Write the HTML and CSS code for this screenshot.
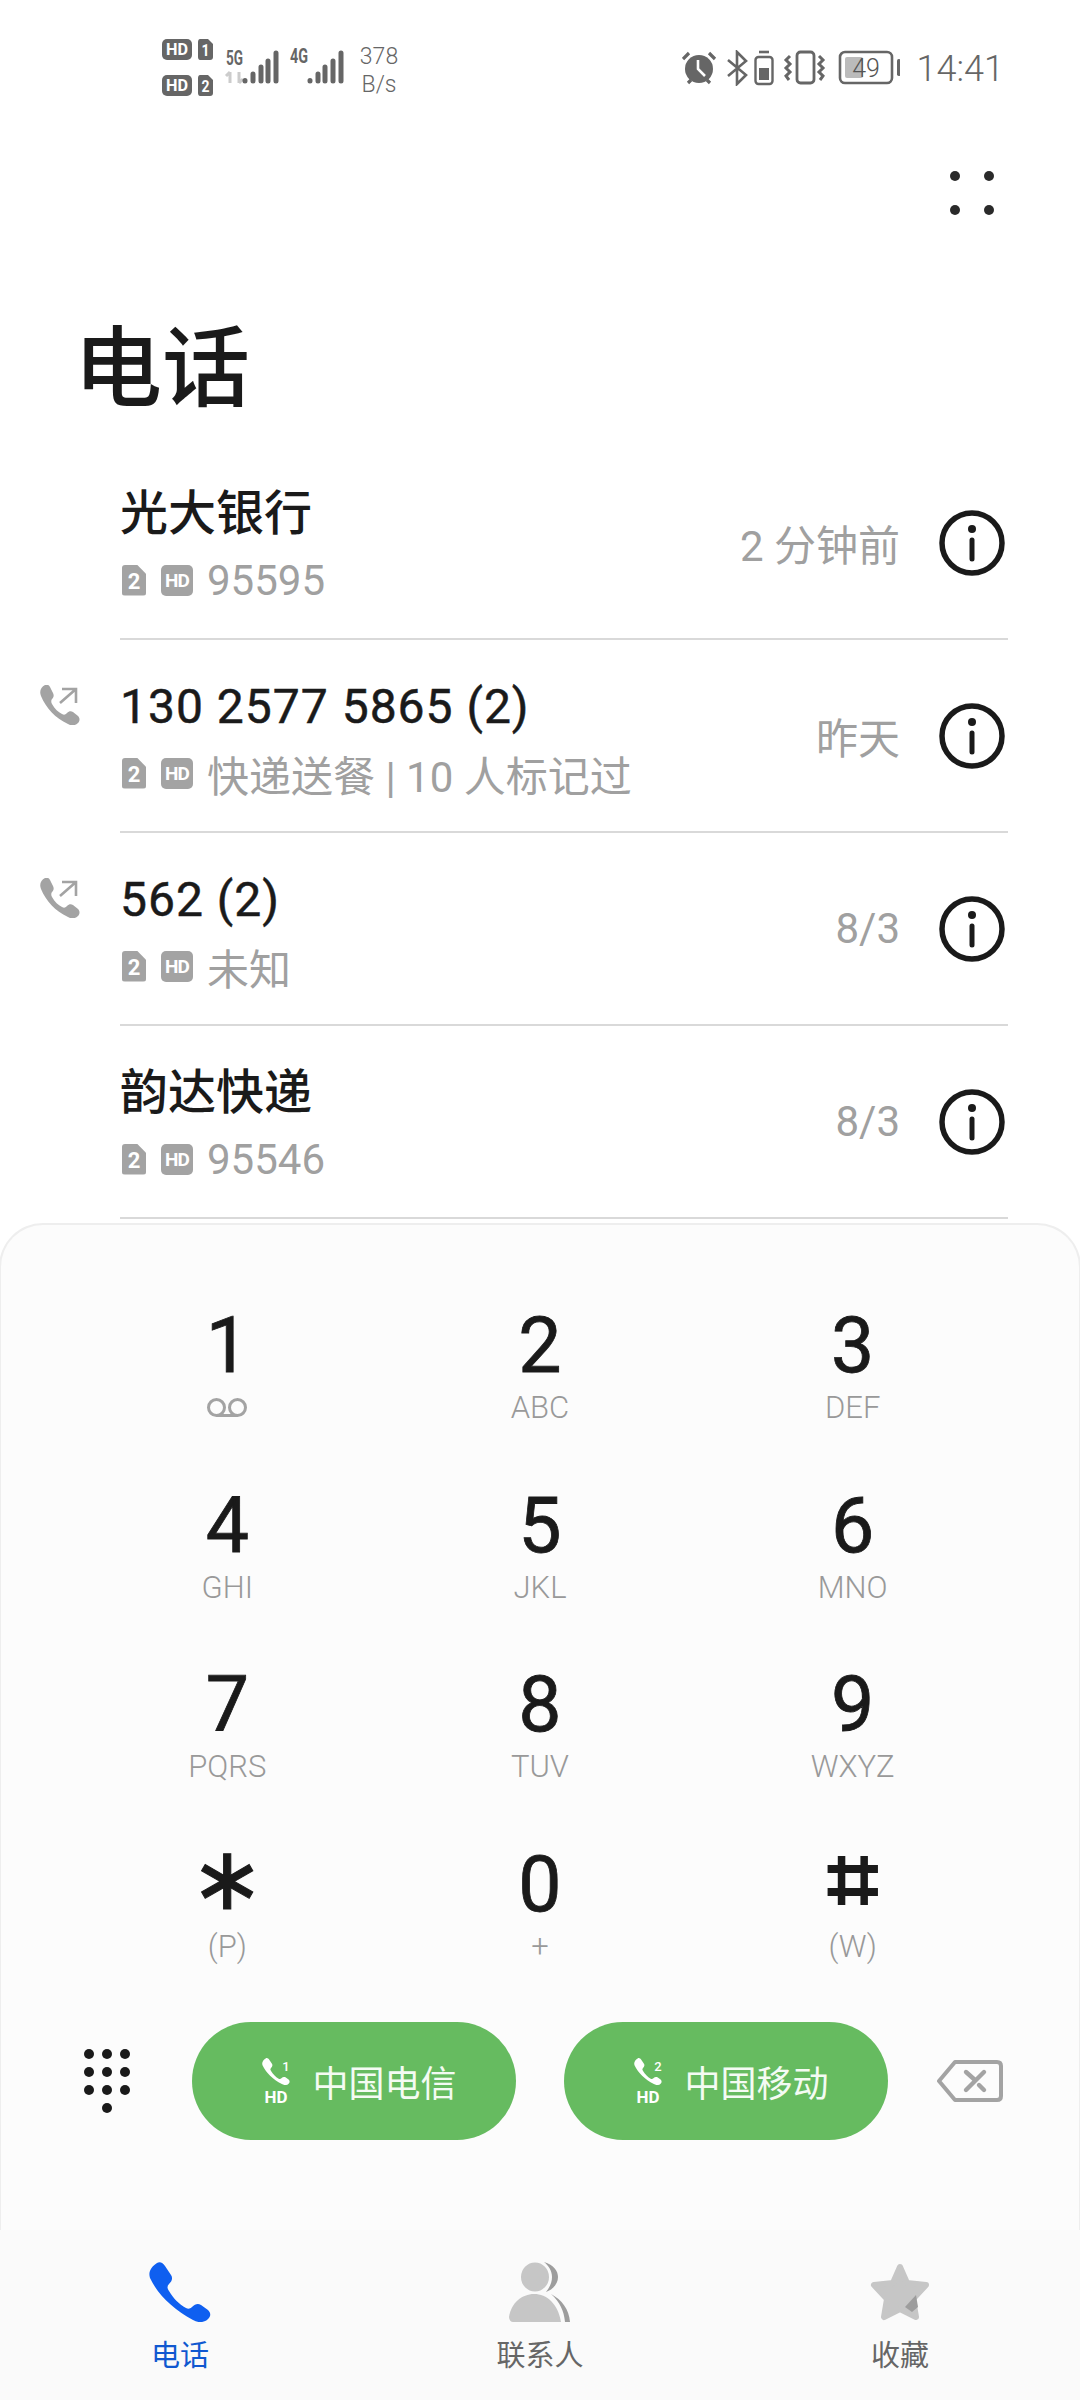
FILE: index.html
```html
<!DOCTYPE html>
<html>
	<head>
		<meta charset="UTF-8">
		<title>电话</title>
		<link rel="stylesheet" href="styles.css">
	</head>
	<body>
		<svg class="defs" width="0" height="0">
			<symbol id="phone" viewBox="0 0 62 60">
				<path d="M8 1C11-1 14 1 16 4L22 13C24 16 23 19 20 22C18 24 18 26 20 29C24 36 30 42 37 46C39 47 41 47 43 45C46 42 49 41 52 43L59 48C62 51 62 54 59 57C55 61 49 61 44 58C24 47 9 33 1 16C-1 10 2 5 8 1Z"/>
			</symbol>
			<symbol id="out" viewBox="0 0 40 40">
				<path fill="#a3a3a3" d="M5 0C7-1 9 0 10 2L13 8C14 10 14 12 12 14C11 15 11 17 12 19C15 24 18 27 22 29C24 30 25 30 27 28C29 26 31 26 33 27L38 31C40 33 40 36 38 38C35 41 31 41 28 39C15 33 6 23 1 11C-1 6 1 2 5 0Z"/>
				<path fill="none" stroke="#a3a3a3" stroke-width="2.6" d="M22 4H36V18M36 4L20 18"/>
			</symbol>
			<symbol id="info" viewBox="0 0 66 66">
				<circle cx="33" cy="33" r="30" fill="none" stroke="#1a1a1a" stroke-width="5.5"/>
				<circle cx="33" cy="19" r="4" fill="#1a1a1a"/>
				<path d="M33 30V49" stroke="#1a1a1a" stroke-width="5" stroke-linecap="round"/>
			</symbol>
		</svg>

		<div class="page">
			<div class="status">
				<svg class="st-left" width="183" height="62" viewBox="0 0 183 62">
					<rect x="0" y="2" width="30" height="21" rx="5" fill="#666"/>
					<text x="15" y="18" text-anchor="middle" class="badge-txt" font-size="16" textLength="22" lengthAdjust="spacingAndGlyphs">HD</text>
					<path fill="#666" d="M38 2H46L51 7V20C51 22 50 23 48 23H38C37 23 36 22 36 20V5C36 3 37 2 38 2Z"/>
					<text x="43.5" y="19" text-anchor="middle" class="badge-txt" font-size="16" textLength="8" lengthAdjust="spacingAndGlyphs">1</text>
					<rect x="0" y="38" width="30" height="21" rx="5" fill="#666"/>
					<text x="15" y="54" text-anchor="middle" class="badge-txt" font-size="16" textLength="22" lengthAdjust="spacingAndGlyphs">HD</text>
					<path fill="#666" d="M38 38H46L51 43V56C51 58 50 59 48 59H38C37 59 36 58 36 56V41C36 39 37 38 38 38Z"/>
					<text x="43.5" y="55" text-anchor="middle" class="badge-txt" font-size="16" textLength="8" lengthAdjust="spacingAndGlyphs">2</text>

					<text x="64" y="28" class="net-txt" font-size="20" textLength="17" lengthAdjust="spacingAndGlyphs">5G</text>
					<path d="M68 46V35M64 39L68 35M77 35V46M77 46L81 42" fill="none" stroke="#ccc" stroke-width="3"/>
					<path d="M83 43.5V44M91 37V44M99 30V44M106 24V44M114 16V44" fill="none" stroke="#666" stroke-width="5" stroke-linecap="round"/>

					<text x="128" y="26" class="net-txt" font-size="20" textLength="18" lengthAdjust="spacingAndGlyphs">4G</text>
					<path d="M148 43.5V44M156 37V44M163 30V44M171 24V44M179 16V44" fill="none" stroke="#666" stroke-width="5" stroke-linecap="round"/>
				</svg>
				<div class="speed">378<br>B/s</div>

				<svg class="st-right" width="218" height="36" viewBox="0 0 218 36">
					<circle cx="17" cy="19" r="14" fill="#666"/>
					<path d="M16 10V19L23 26" fill="none" stroke="#fff" stroke-width="2.6"/>
					<path d="M1 9L7 3M33 9L27 3M6 33L9 30M28 33L25 30" fill="none" stroke="#666" stroke-width="3.2"/>

					<path d="M46 10L64 25L55 34V2L64 11L46 26" fill="none" stroke="#666" stroke-width="2.6"/>

					<path d="M77 2H87" stroke="#666" stroke-width="2.6"/>
					<rect x="73.5" y="7" width="17" height="27" rx="3" fill="none" stroke="#666" stroke-width="2.4"/>
					<rect x="77" y="18" width="10" height="12" fill="#666"/>

					<rect x="115" y="2" width="17" height="31" rx="3.5" fill="none" stroke="#666" stroke-width="2.8"/>
					<path d="M108 6L104 10L108 14L104 18L108 22L104 26L107 30M137 6L141 10L137 14L141 18L137 22L141 26L138 30" fill="none" stroke="#666" stroke-width="3"/>

					<rect x="158" y="2" width="52" height="31" rx="5" fill="none" stroke="#666" stroke-width="2.6"/>
					<rect x="163" y="7" width="18" height="21" rx="2" fill="#bbb"/>
					<text x="184" y="27" text-anchor="middle" class="batt-txt" font-size="25">49</text>
					<rect x="215" y="9" width="3.5" height="17" rx="1.7" fill="#666"/>
				</svg>
				<div class="clock">14:41</div>
			</div>

			<div class="topbar">
				<svg width="44" height="44" viewBox="0 0 44 44" fill="#2a2a2a">
					<circle cx="5" cy="5" r="5"/>
					<circle cx="39" cy="5" r="5"/>
					<circle cx="5" cy="39" r="5"/>
					<circle cx="39" cy="39" r="5"/>
				</svg>
			</div>

			<h1 class="title">电话</h1>

			<div class="calls">
				<div class="call">
					<div class="call-dir"></div>
					<div class="call-main">
						<div class="call-text">
							<div class="call-name name-cjk">光大银行</div>
							<div class="call-sub">
								<span class="sim">2</span>
								<span class="hd">HD</span>
								<span>95595</span>
							</div>
						</div>
						<div class="call-time">2 分钟前</div>
						<svg class="info"><use href="#info"/></svg>
					</div>
				</div>
				<div class="call">
					<div class="call-dir"><svg class="dir-icon"><use href="#out"/></svg></div>
					<div class="call-main">
						<div class="call-text">
							<div class="call-name">130 2577 5865 (2)</div>
							<div class="call-sub">
								<span class="sim">2</span>
								<span class="hd">HD</span>
								<span>快递送餐 | 10 人标记过</span>
							</div>
						</div>
						<div class="call-time">昨天</div>
						<svg class="info"><use href="#info"/></svg>
					</div>
				</div>
				<div class="call">
					<div class="call-dir"><svg class="dir-icon"><use href="#out"/></svg></div>
					<div class="call-main">
						<div class="call-text">
							<div class="call-name">562 (2)</div>
							<div class="call-sub">
								<span class="sim">2</span>
								<span class="hd">HD</span>
								<span>未知</span>
							</div>
						</div>
						<div class="call-time">8/3</div>
						<svg class="info"><use href="#info"/></svg>
					</div>
				</div>
				<div class="call">
					<div class="call-dir"></div>
					<div class="call-main">
						<div class="call-text">
							<div class="call-name name-cjk">韵达快递</div>
							<div class="call-sub">
								<span class="sim">2</span>
								<span class="hd">HD</span>
								<span>95546</span>
							</div>
						</div>
						<div class="call-time">8/3</div>
						<svg class="info"><use href="#info"/></svg>
					</div>
				</div>
			</div>

			<div class="sheet">
				<div class="keys">
					<div class="key">
						<div class="key-num">1</div>
						<div class="key-sub">
							<svg width="42" height="20" viewBox="0 0 42 20" fill="none" stroke="#a3a3a3" stroke-width="3">
								<circle cx="10.5" cy="9.5" r="8"/>
								<circle cx="31.5" cy="9.5" r="8"/>
								<path d="M10.5 17.5H31.5"/>
							</svg>
						</div>
					</div>
					<div class="key"><div class="key-num">2</div><div class="key-sub">ABC</div></div>
					<div class="key"><div class="key-num">3</div><div class="key-sub">DEF</div></div>
					<div class="key"><div class="key-num">4</div><div class="key-sub">GHI</div></div>
					<div class="key"><div class="key-num">5</div><div class="key-sub">JKL</div></div>
					<div class="key"><div class="key-num">6</div><div class="key-sub">MNO</div></div>
					<div class="key"><div class="key-num">7</div><div class="key-sub">PQRS</div></div>
					<div class="key"><div class="key-num">8</div><div class="key-sub">TUV</div></div>
					<div class="key"><div class="key-num">9</div><div class="key-sub">WXYZ</div></div>
					<div class="key"><div class="key-num star">∗</div><div class="key-sub">(P)</div></div>
					<div class="key"><div class="key-num">0</div><div class="key-sub">+</div></div>
					<div class="key"><div class="key-num hash">⌗</div><div class="key-sub">(W)</div></div>
				</div>

				<div class="actions">
					<svg class="pad-icon" width="46" height="64" viewBox="0 0 46 64" fill="#1a1a1a">
						<circle cx="5" cy="5" r="5"/><circle cx="23" cy="5" r="5"/><circle cx="41" cy="5" r="5"/>
						<circle cx="5" cy="23" r="5"/><circle cx="23" cy="23" r="5"/><circle cx="41" cy="23" r="5"/>
						<circle cx="5" cy="41" r="5"/><circle cx="23" cy="41" r="5"/><circle cx="41" cy="41" r="5"/>
						<circle cx="23" cy="59" r="5"/>
					</svg>
					<div class="dial">
						<svg class="dial-icon" width="30" height="54" viewBox="0 0 30 54">
							<use href="#phone" width="28" height="27" fill="#fff"/>
							<text x="24" y="13" class="dial-sim" font-size="13" text-anchor="middle">1</text>
							<text x="14" y="45" class="dial-hd" font-size="16" text-anchor="middle" textLength="23" lengthAdjust="spacingAndGlyphs">HD</text>
						</svg>
						<span>中国电信</span>
					</div>
					<div class="dial">
						<svg class="dial-icon" width="30" height="54" viewBox="0 0 30 54">
							<use href="#phone" width="28" height="27" fill="#fff"/>
							<text x="24" y="13" class="dial-sim" font-size="13" text-anchor="middle">2</text>
							<text x="14" y="45" class="dial-hd" font-size="16" text-anchor="middle" textLength="23" lengthAdjust="spacingAndGlyphs">HD</text>
						</svg>
						<span>中国移动</span>
					</div>
					<svg class="del-icon" width="66" height="42" viewBox="0 0 66 42" fill="none" stroke="#a3a3a3" stroke-width="4">
						<path d="M18 2H60C62.500 2 64 3.500 64 6V36C64 38.500 62.500 40 60 40H18L2 21Z" stroke-linejoin="round"/>
						<path d="M29 30L47 12M29 12L38 20M42 25L47 30" stroke-width="4.400" stroke-linecap="round"/>
					</svg>
				</div>
			</div>

			<div class="tabs">
				<div class="tab tab-on">
					<svg width="62" height="60" fill="#0f5ff0"><use href="#phone"/></svg>
					<div class="tab-label">电话</div>
				</div>
				<div class="tab">
					<svg width="62" height="60" viewBox="0 0 62 60">
						<path fill="#9d9d9d" d="M35 0C45 3 49 9 49 15C49 21 45 27 37 30C41 25 43 20 43 15C43 9 40 4 35 0Z"/>
						<path fill="#9d9d9d" d="M42 32C53 38 60 47 61 60H56C55 49 51 40 42 32Z"/>
						<ellipse cx="26" cy="15" rx="14" ry="14.500" fill="#c6c6c6"/>
						<path fill="#c6c6c6" d="M0 55C2 41 13 32 25 32C38 32 49 42 52 60H4C2 60 0 58 0 55Z"/>
					</svg>
					<div class="tab-label">联系人</div>
				</div>
				<div class="tab">
					<svg width="62" height="60" viewBox="0 0 62 60">
						<path fill="#c6c6c6" stroke="#c6c6c6" stroke-width="6" stroke-linejoin="round" d="M31 5L38 21L57 23L44 37L47 55L31 47L15 55L18 37L5 23L24 21Z"/>
						<path fill="#9d9d9d" d="M47 33L49 45L43 50L36 45Z"/>
					</svg>
					<div class="tab-label">收藏</div>
				</div>
			</div>
		</div>
	</body>
</html>
```

FILE: styles.css
```css
*{margin: 0;padding: 0;box-sizing: border-box;}
body{background: #fff;font-family: Roboto, "Noto Sans CJK SC", sans-serif;color: #1a1a1a;}
.defs{display: block;height: 0;}
.page{width: 1080px;height: 2400px;display: flex;flex-direction: column;overflow: hidden;}

/* status bar */
.status{height: 136px;padding: 0 76px 0 162px;display: flex;align-items: center;color: #666;}
.st-left{flex: none;}
.speed{width: 54px;margin-left: 7px;padding-top: 5px;font-size: 23px;line-height: 28px;font-weight: 300;text-align: center;}
.st-right{margin-left: auto;flex: none;}
.clock{margin-left: 17px;padding-top: 2px;font-size: 36px;font-weight: 300;line-height: 40px;}
.badge-txt{fill: #fff;font-family: Roboto, sans-serif;font-weight: 700;}
.net-txt{fill: #666;font-family: Roboto, sans-serif;font-weight: 700;}
.batt-txt{fill: #555;font-family: Roboto, sans-serif;font-weight: 300;}

.topbar{height: 183px;padding: 35px 86px 0 0;display: flex;justify-content: flex-end;}
.title{height: 100px;margin: 0 0 28px;padding: 0 0 0 74px;font-size: 88px;line-height: 100px;font-weight: 500;}

/* recent calls */
.call{height: 193px;display: flex;}
.call-dir{width: 120px;padding: 45px 0 0 40px;}
.dir-icon{width: 40px;height: 40px;display: block;}
.call-main{flex: 1;margin-right: 72px;border-bottom: 2px solid #d9d9d9;display: flex;align-items: center;}
.call-text{flex: 1;padding-top: 9px;}
.call-name{font-size: 48px;line-height: 66px;letter-spacing: 1px;-webkit-text-stroke: .5px #1a1a1a;}
.name-cjk{font-weight: 500;letter-spacing: 0;-webkit-text-stroke: 0;}
.call-sub{display: flex;align-items: center;height: 66px;font-size: 42px;color: #a0a0a0;}
.sim{width: 24px;height: 31px;margin: 0 15px 0 2px;flex: none;background: #a3a3a3;color: #fff;border-radius: 3px;font-size: 22px;font-weight: 700;line-height: 33px;text-align: center;clip-path: polygon(0 0, 62% 0, 100% 30%, 100% 100%, 0 100%);}
.hd{width: 32px;height: 31px;margin-right: 14px;flex: none;background: #a3a3a3;color: #fff;border-radius: 5px;font-size: 19px;font-weight: 700;line-height: 31px;letter-spacing: -1px;text-align: center;}
.call-time{font-size: 42px;color: #a0a0a0;margin-right: 39px;}
.info{width: 66px;height: 66px;flex: none;margin-right: 3px;}

/* dial pad */
.sheet{flex: 1;margin-top: 4px;padding-top: 80px;background: #fcfcfc;border: 2px solid #eee;border-bottom: 0;border-radius: 44px 44px 0 0;margin-left: -1px;margin-right: -1px;}
.keys{display: grid;grid-template-columns: repeat(3, 1fr);row-gap: 58.5px;padding: 0 70px;}
.key{height: 121px;text-align: center;}
.key-num{height: 80px;padding-top: 1px;font-size: 77px;line-height: 80px;-webkit-text-stroke: .8px #1a1a1a;}
.key-sub{height: 41px;padding-top: 3px;font-size: 31px;line-height: 40px;font-weight: 300;color: #999;}
.key-sub svg{margin-top: 9px;}
.star{padding-top: 0;font-family: "DejaVu Sans", sans-serif;font-size: 88px;line-height: 70px;-webkit-text-stroke: 1px #1a1a1a;}
.hash{padding-top: 0;font-family: "DejaVu Sans", sans-serif;font-size: 88px;line-height: 72px;-webkit-text-stroke: 4px #1a1a1a;}

.actions{margin-top: 57px;padding-left: 83px;display: flex;align-items: center;}
.pad-icon{flex: none;margin-right: 62px;}
.dial{width: 324px;height: 118px;margin-right: 48px;border-radius: 59px;background: #66bb60;color: #f4fbf3;display: flex;align-items: center;justify-content: center;gap: 20px;font-size: 36px;padding-left: 11px;}
.dial-icon{flex: none;margin-top: 8px;}
.dial-sim{fill: #fff;font-family: Roboto, sans-serif;font-weight: 500;}
.dial-hd{fill: #fff;font-family: Roboto, sans-serif;font-weight: 700;}
.del-icon{flex: none;margin-left: 1px;}

/* bottom tabs */
.tabs{height: 170px;padding-top: 32px;background: #fafafa;display: grid;grid-template-columns: repeat(3, 1fr);}
.tab{text-align: center;color: #666;}
.tab svg{display: block;margin: 0 auto;}
.tab-label{margin-top: 16px;font-size: 29px;line-height: 36px;}
.tab-on{color: #1058d0;}
```
